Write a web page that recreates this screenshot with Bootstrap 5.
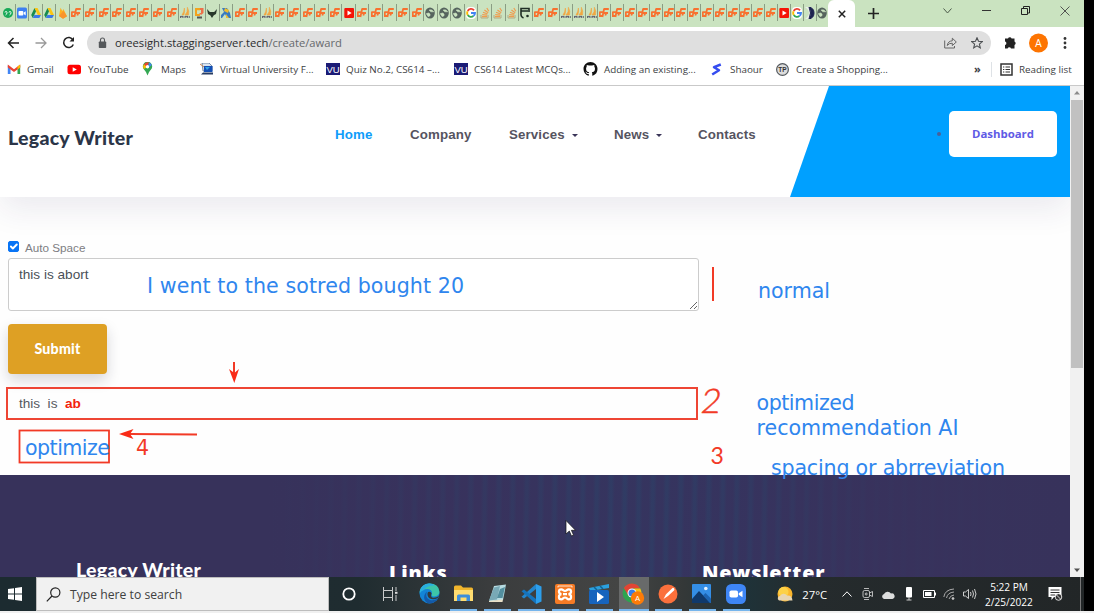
<!DOCTYPE html>
<html lang="en">
<head>
<meta charset="utf-8">
<meta name="viewport" content="width=device-width, initial-scale=1">
<title>Legacy Writer</title>
<link href="https://cdn.jsdelivr.net/npm/bootstrap@5.3.0/dist/css/bootstrap.min.css" rel="stylesheet">
<style>
  :root { --ui: "Open Sans", "Noto Sans", sans-serif; --doc: "Liberation Sans", Arial, sans-serif; --head: Lato, "Open Sans", sans-serif; }
  body { width: 1094px; height: 613px; overflow: hidden; background: #000; font-family: var(--doc); }
  svg { display: block; flex: none; }
  .screen { width: 1084px; height: 611px; background: #fff; }
  .edge-line { height: 2px; background: #f0f0f0; }

  /* browser chrome */
  .tab-strip { height: 27px; background: #cae3c0; }
  .tab-list { width: 828px; padding-left: 2px; overflow: hidden; }
  .fav { flex: none; width: 13.62px; height: 17px; margin-top: 4px; border-right: 1px solid #8a9d84; }
  .fav.slim { width: 12.83px; }
  .tab-active { width: 27px; background: #fff; border-radius: 6px 6px 0 0; }
  .win-btn { width: 39px; }
  .toolbar { height: 31px; font-family: var(--ui); }
  .address { width: 904px; height: 24px; background: #dfdfdf; font-size: 11.2px; color: #2a2c2e; padding: 1px 8px 0 11px; }
  .address .path { color: #66696c; }
  .bookmarks { height: 28px; border-bottom: 1px solid #c9c9c9; font-family: var(--ui); font-size: 9.85px; color: #3c4043; padding-bottom: 4px; }
  .bm { gap: 6px; white-space: nowrap; }

  /* site */
  .site { width: 1070px; height: 491px; overflow: hidden; background: #fefefe; }
  .site-head { height: 111px; background: #fff; box-shadow: 0 12px 30px rgba(40,35,90,.09); flex: none; }
  .site-logo { width: 327px; padding-left: 8px; font: 900 19.6px var(--head); letter-spacing: .22px; color: #2b3548; padding-bottom: 9px; }
  .main-nav { font-size: 13.3px; font-weight: 700; color: #56545f; padding-bottom: 13px; letter-spacing: .12px; }
  .main-nav .here { color: #0f9dfa; }
  .tri { width: 0; height: 0; border: 3.2px solid transparent; border-top: 3.6px solid #3a3558; border-bottom: 0; margin-left: 7px; }
  .slant { width: 280px; background: #00a0ff; clip-path: polygon(39px 0, 100% 0, 100% 100%, 0 100%); padding: 25px 13px 0 0; }
  .dash { width: 108px; height: 46px; padding-bottom: 1px; border-radius: 5px; background: #fff; color: #605be5; font: 700 11.4px "Open Sans", sans-serif; }
  .dot { width: 4px; height: 4px; background: #49609a; margin: 0 8px 0 0; }
  .editor { padding: 43px 0 0 8px; height: 278px; flex: none; }
  .editor .form-check-input { width: 11px; height: 11px; margin: 0 0 1px; border-radius: 2px; background-color: #0874f5; border-color: #0874f5; background-size: 13px; }
  .auto { font-size: 11.7px; color: #7d7d82; gap: 6px; height: 14px; }
  .editor textarea.form-control { width: 691px; height: 53px; min-height: 0; margin-top: 4px; border: 1px solid #ccc; border-radius: 3px; font-size: 13.6px; line-height: 18px; padding: 7px 10px 5px; color: #495057; box-shadow: none; }
  .btn.submit { width: 99px; height: 50px; margin-top: 13px; padding: 0 0 2px; background: #dea024; border: 0; border-radius: 4px; color: #fff; font: 900 14.2px var(--head); letter-spacing: .2px; box-shadow: 0 6px 14px rgba(30,30,50,.18); }
  .result { width: 692px; height: 33px; margin: 13px 0 0 -1.6px; border: 2px solid #ee4534; padding: 2px 0 0 10.5px; font-size: 13.6px; color: #55585e; white-space: pre; }
  .result b { color: #f2230d; }
  .site-foot { flex: 1; color: #fff; padding: 82px 0 0 76px;
    background: linear-gradient(90deg, #37325b 0, #37325b 25%, rgba(56,50,92,.6) 45%, rgba(50,54,95,.45) 58%, rgba(52,52,94,.5) 68%, rgba(56,50,92,.9) 82%, #37325b 100%),
      repeating-linear-gradient(91deg, #38335f 0 5px, #2f4068 8px 10px, #38335f 13px 14px); }
  .site-foot h5 { width: 313px; margin: 0; font: 900 19.6px/26px var(--head); letter-spacing: .22px; white-space: nowrap; }
  .site-foot h5.wide { font: 800 19.8px/29px "Open Sans", sans-serif; letter-spacing: .8px; padding-top: 1px; }
  .scroll { width: 14px; height: 491px; background: #f1f1f1; }
  .thumb { width: 12px; height: 268px; margin: 1px auto 0; background: #c1c1c1; }
  .ink { left: 0; top: 86px; z-index: 3; pointer-events: none; }

  /* taskbar */
  .taskbar { height: 34px; color: #fff; font-family: var(--ui); background: linear-gradient(90deg, #1c2b30 0, #1f2c30 33%, #3a3c3d 45%, #444544 57%, #343838 63%, #1f3238 69%, #252b2d 75%, #222627 100%); }
  .task-search { width: 293px; background: #f1f1f1; border: 1px solid #bdbdbd; color: #404040; font-size: 12.2px; gap: 9px; padding-left: 9px; }
  .app { width: 34.1px; position: relative; padding-bottom: 1px; }
  .app.open::after { content: ""; position: absolute; bottom: 0; left: 4px; width: 27px; height: 2px; background: #76b5ec; }
  .app.now { background: #686a6a; width: 30px; margin: 0 2px; }
  .app.now::after { left: 0; width: 30px; }
  .tray-i { width: 20.4px; }
  .clock { width: 58px; font-size: 10.1px; line-height: 15.5px; text-align: center; white-space: nowrap; padding-top: 2px; }
  .peek { width: 4px; height: 34px; margin-left: 7px; border-left: 1px solid #777; }
</style>
</head>
<body>
<svg width="0" height="0" class="position-absolute" aria-hidden="true">
  <symbol id="i-x" viewBox="0 0 10 12"><path d="M5 2H9.800M5.200 1.500L3.400 10M.3 5.200H3.800M5 6H9M.8 5V9H3.200M7.300 6L6.300 8.500" fill="none" stroke="#f8712f" stroke-width="1.800"/></symbol>
  <symbol id="i-chat" viewBox="0 0 10 12"><circle cx="5" cy="6" r="5" fill="#18a957"/><path d="M2 5.500A1 1 0 1 1 4 5.500Q4 7.500 2.500 8M6 5.500A1 1 0 1 1 8 5.500Q8 7.500 6.500 8" fill="none" stroke="#fff" stroke-width=".9"/></symbol>
  <symbol id="i-zoom" viewBox="0 0 10 12"><rect y=".6" width="10" height="11" rx="1.600" fill="#3e80f1"/><rect x="1.500" y="4" width="4.800" height="4.600" rx="1" fill="#fff"/><path d="M6.700 5.600L8.700 4.200V8.400L6.700 7z" fill="#fff"/></symbol>
  <symbol id="i-drive" viewBox="0 0 10 12"><path d="M3.500 1L.2 8 1.800 11 5.200 4z" fill="#188b50"/><path d="M3.500 1H6.500L10 8H6.800z" fill="#fbc412"/><path d="M3.300 8H10L8.300 11H1.800z" fill="#3c79e6"/></symbol>
  <symbol id="i-fire" viewBox="0 0 10 12"><path d="M1 9L2.500.7 4.400 4 5.400 2 9 9.200 5 11.700z" fill="#ffb01f"/><path d="M1 9L5.400 4 9 9.200 5 11.700z" fill="#f9942b"/></symbol>
  <symbol id="i-pma" viewBox="0 0 10 12"><path d="M2 8Q4 5 4.400 1Q5 5 3.800 8zM5 8Q8 5 7.400.3Q9.500 4 8.500 8z" fill="#f2a640" stroke="#f2a640" stroke-width=".6"/><path d="M.5 9V11M2.200 9V11M4 9V11M5.800 9V11M7.600 9V11M9.300 9V11M.5 9.400H3M5 9.400H8" stroke="#5c5a6b" stroke-width=".9"/></symbol>
  <symbol id="i-cube" viewBox="0 0 10 12"><path d="M1 1H6V3.200H3V7H6V9H1z" fill="#f3a31e"/><path d="M6 1H9.500V6L7 8 5 6H7V3H6z" fill="#ee6f49"/><path d="M3 10.500H8" stroke="#555" stroke-width="2"/></symbol>
  <symbol id="i-deer" viewBox="0 0 10 12"><path d="M0 2L2.800 5H7.200L10 2 9 7 6.800 8.300 5 11 3.200 8.300 1 7z" fill="#28382b"/></symbol>
  <symbol id="i-kid" viewBox="0 0 10 12"><path d="M1 1H6L9 6 10 11H6L4 7 1 11H0V8L3 5z" fill="#397bc0"/><path d="M4 1L8 3 7 6 3 4zM5 7L8 11H5z" fill="#f1bd2d"/></symbol>
  <symbol id="i-yt" viewBox="0 0 10 12"><rect x=".3" y="1" width="9.700" height="10" rx="1" fill="#f51407"/><path d="M3.500 3.500L7.700 6 3.500 8.500z" fill="#fff"/></symbol>
  <symbol id="i-globe" viewBox="0 0 10 12"><ellipse cx="5" cy="6" rx="4.800" ry="5.500" fill="#56645e"/><path d="M1 6.800Q4 5 5 7T3 9.800M4 3Q7 1.800 8.800 4.800H5.800z" fill="#cae3c0" stroke="#cae3c0" stroke-width=".5"/></symbol>
  <symbol id="i-g" viewBox="0 0 10 12"><rect width="10" height="12" rx="4" fill="#fff"/><g fill="none" stroke-width="1.900"><path d="M8 3.300A3.800 4 0 0 0 1.700 4" stroke="#ea4335"/><path d="M1.600 4.200A4 4 0 0 0 1.700 8" stroke="#fbbc05"/><path d="M1.800 8A3.800 4 0 0 0 7.400 9" stroke="#34a853"/><path d="M5 6H9Q9 8 7.400 9" stroke="#4285f4"/></g></symbol>
  <symbol id="i-so" viewBox="0 0 10 12"><path d="M1 8V11H8V8" fill="none" stroke="#b4aa83"/><path d="M2 9.600H7M2.200 7.600L7 8.200M3 5.200L7.600 7M4.400 3L8.200 5.800M6.800 1L8.800 4.200" stroke="#ef9d50" stroke-width="1.200"/></symbol>
  <symbol id="i-cup" viewBox="0 0 10 12"><path d="M3.500 11Q1 10 1 8V1.500H9V5M1 4H8" fill="none" stroke="#1e2e24" stroke-width="1.600"/><circle cx="7.500" cy="9" r="1.300" fill="#1e2e24"/></symbol>
  <symbol id="i-moon" viewBox="0 0 10 12"><path d="M0 0H7V12H0Q8 6 0 0z" fill="#e9eee8"/><path d="M4 0Q9 1 9 6T4 12Q7 6 4 0z" fill="#1e2350" stroke="#1e2350"/></symbol>
</svg>

<div class="screen position-relative">
  <div class="tab-strip d-flex">
    <div class="tab-list d-flex" id="tabs"></div>
    <div class="tab-active d-flex align-items-center justify-content-center"><svg width="8" height="8" viewBox="0 0 8 8"><path d="M.8.8L7.200 7.200M7.200.8L.8 7.200" stroke="#222" stroke-width="1.500"/></svg></div>
    <div class="d-flex align-items-center justify-content-center" style="width:37px"><svg width="11" height="11" viewBox="0 0 11 11"><path d="M5.500 0V11M0 5.500H11" stroke="#222" stroke-width="1.700"/></svg></div>
    <div class="d-flex ms-auto" style="padding-bottom:6px">
      <div class="win-btn d-flex align-items-center justify-content-center"><svg width="9" height="6" viewBox="0 0 9 6"><path d="M.5.5L4.500 5 8.500.5" fill="none" stroke="#4d5a4a"/></svg></div>
      <div class="win-btn d-flex align-items-center justify-content-center"><svg width="9" height="2"><path d="M0 .5H9" stroke="#333"/></svg></div>
      <div class="win-btn d-flex align-items-center justify-content-center"><svg width="9" height="9" viewBox="0 0 9 9"><path d="M.5 2.500H6.500V8.500H.5zM2.500 2V.5H8.500V7H7" fill="none" stroke="#222"/></svg></div>
      <div class="win-btn d-flex align-items-center justify-content-center"><svg width="10" height="10" viewBox="0 0 10 10"><path d="M.5.5L9.500 9.500M9.500.5L.5 9.500" stroke="#444" stroke-width=".9"/></svg></div>
    </div>
  </div>

  <div class="toolbar d-flex align-items-center">
    <svg width="87" height="30" viewBox="0 0 87 30" fill="none"><path d="M19 15H8.500M13.500 10L8.500 15 13.500 20" stroke="#222" stroke-width="1.500"/><path d="M35.500 15H46M41 10L46 15 41 20" stroke="#999" stroke-width="1.300"/><path d="M73 12A5 5 0 1 0 73.300 16.500" stroke="#222" stroke-width="1.500"/><path d="M74 9V13.500H69.500z" fill="#222"/></svg>
    <div class="address rounded-pill d-flex align-items-center">
      <svg width="9" height="12" viewBox="0 0 9 12"><rect x=".8" y="4.500" width="7.400" height="6.500" rx=".8" fill="#55585b"/><path d="M2.500 5V3A2 2 0 0 1 6.500 3V5" fill="none" stroke="#55585b" stroke-width="1.100"/></svg>
      <span class="ms-2">oreesight.staggingserver.tech<span class="path">/create/award</span></span>
      <svg class="ms-auto" width="13" height="12" viewBox="0 0 13 12" fill="none" stroke="#666"><path d="M.7 3.500V11H10.500V9M3.200 8.500Q4 4 8.300 3.800V1.200L12.300 5 8.300 8.600V6.200Q5 6 3.200 8.500z"/></svg>
      <svg style="margin-left:14px" width="12" height="12" viewBox="0 0 12 12"><path d="M6 .8L7.500 4.300 11.300 4.600 8.400 7.100 9.300 10.900 6 8.900 2.700 10.900 3.600 7.100.7 4.600 4.500 4.300z" fill="none" stroke="#4c4f52" stroke-width="1.100"/></svg>
    </div>
    <svg width="93" height="30" viewBox="0 0 93 30"><path d="M14 10.500H17A1.900 1.900 0 0 1 20.600 10.500H23.500V13.500A1.900 1.900 0 0 1 23.500 17V20.500H20A1.800 1.800 0 0 0 16.600 20.500H14V17A1.800 1.800 0 0 0 14 13.500z" fill="#222"/><circle cx="47.500" cy="15" r="9.500" fill="#fd7401"/><text x="47.500" y="19" font-size="10.500" fill="#fff" text-anchor="middle" font-family="Roboto">A</text><g fill="#333"><circle cx="74" cy="10.500" r="1.400"/><circle cx="74" cy="15" r="1.400"/><circle cx="74" cy="19.500" r="1.400"/></g></svg>
  </div>

  <div class="bookmarks d-flex align-items-center">
    <div class="bm d-flex align-items-center" style="width:60px;padding-left:7px"><svg width="14" height="12" viewBox="0 0 14 12"><path d="M.8 11V2.500L3.500 4.500V11z" fill="#4285f4"/><path d="M10.500 11V4.500L13.200 2.500V11z" fill="#34a853"/><path d="M.8 1.500L7 6.200 13.200 1.500V4.500L7 9 .8 4.500z" fill="#ea4335"/><path d="M10.500 3.500L13.200 1.500V4.500L10.500 6.500z" fill="#fbbc04"/></svg><span>Gmail</span></div>
    <div class="bm d-flex align-items-center" style="width:81px;padding-left:7px"><svg width="15" height="11" viewBox="0 0 15 11"><rect x=".5" y=".8" width="13.500" height="9.500" rx="2.500" fill="#f00"/><path d="M5.700 3.200L9.800 5.500 5.700 7.800z" fill="#fff"/></svg><span>YouTube</span></div>
    <div class="bm d-flex align-items-center" style="width:59px;gap:7px"><svg width="13" height="14" viewBox="0 0 13 14"><path d="M6.500 13.500Q5.500 10 3 7.500A4.700 4.700 0 1 1 10 7.500Q7.500 10 6.500 13.500z" fill="#34a853"/><path d="M2.500 7A4.600 4.600 0 0 1 3 2L7 5z" fill="#fbbc04"/><path d="M3 2.200A4.700 4.700 0 0 1 8 .6L6 5z" fill="#ea4335"/><path d="M8 .6A4.700 4.700 0 0 1 10.800 3L7 6z" fill="#4285f4"/><circle cx="6.500" cy="4.800" r="1.700" fill="#fff"/></svg><span>Maps</span></div>
    <div class="bm d-flex align-items-center" style="width:126px"><svg width="14" height="13" viewBox="0 0 14 13"><path d="M2 0H9L12 3V8H3z" fill="#d9e3ef" stroke="#486285" stroke-width=".7"/><path d="M4 3H12.500V9H4z" fill="#134fb4"/><path d="M5 4H10L7 7z" fill="#37a4e4"/><path d="M3 9.500H13V11.500H1z" fill="#283d63"/><path d="M0 1L4 4" stroke="#d18a4d"/></svg><span>Virtual University F...</span></div>
    <div class="bm d-flex align-items-center" style="width:128px"><svg width="14" height="13" viewBox="0 0 14 13"><rect width="14" height="12" fill="#1b1b75"/><text x="7" y="9.500" font-size="9.500" text-anchor="middle" fill="#fff" font-family="Liberation Sans">VU</text></svg><span>Quiz No.2, CS614 –...</span></div>
    <div class="bm d-flex align-items-center" style="width:129px"><svg width="14" height="13" viewBox="0 0 14 13"><rect width="14" height="12" fill="#1b1b75"/><text x="7" y="9.500" font-size="9.500" text-anchor="middle" fill="#fff" font-family="Liberation Sans">VU</text></svg><span>CS614 Latest MCQs...</span></div>
    <div class="bm d-flex align-items-center" style="width:128px"><svg width="15" height="14" viewBox="0 0 16 16"><path fill="#111" d="M8 0C3.580 0 0 3.580 0 8c0 3.540 2.290 6.530 5.470 7.590.4.070.55-.17.55-.38v-1.490c-2.010.37-2.530-.49-2.690-.94-.09-.23-.48-.94-.82-1.130-.28-.15-.68-.52-.01-.53.63-.01 1.080.58 1.230.82.72 1.210 1.870.87 2.330.66.07-.52.28-.87.51-1.070-1.780-.2-3.640-.89-3.640-3.950 0-.87.31-1.590.82-2.150-.08-.2-.36-1.020.08-2.120 0 0 .67-.21 2.200.82a7.700 7.700 0 0 1 4 0c1.530-1.040 2.200-.82 2.200-.82.44 1.100.16 1.920.08 2.120.51.56.82 1.270.82 2.150 0 3.070-1.870 3.750-3.650 3.950.29.25.54.73.54 1.480v2.190c0 .21.15.46.55.38A8 8 0 0 0 16 8c0-4.420-3.580-8-8-8"/></svg><span>Adding an existing...</span></div>
    <div class="bm d-flex align-items-center" style="width:65px;gap:8px"><svg width="11" height="13" viewBox="0 0 11 13"><path d="M9.800 1.500L3 4.200 8 7.200 1.200 11.500" fill="none" stroke="#354df0" stroke-width="2.500" stroke-linejoin="round"/></svg><span>Shaour</span></div>
    <div class="bm d-flex align-items-center" style="width:198px;gap:7px"><svg width="13" height="13" viewBox="0 0 13 13"><circle cx="6.500" cy="6.500" r="5.900" fill="#ddd" stroke="#53595e" stroke-width="1.200"/><text x="6.500" y="9" font-size="6.500" font-weight="bold" text-anchor="middle" fill="#333" font-family="Liberation Sans">TP</text></svg><span>Create a Shopping...</span></div>
    <span class="fw-bold" style="width:17px;font-size:11px">»</span>
    <div class="bm d-flex align-items-center border-start ps-2"><svg width="13" height="13" viewBox="0 0 13 13"><path d="M1 1H12V12H1z" fill="none" stroke="#333" stroke-width="1.500"/><path d="M3 4H4.300M3 6.500H4.300M3 9H4.300M5.500 4H10M5.500 6.500H10M5.500 9H10" stroke="#333" stroke-width="1.100"/></svg><span>Reading list</span></div>
  </div>

  <div class="d-flex">
    <main class="site d-flex flex-column">
      <header class="site-head d-flex">
        <div class="site-logo d-flex align-items-center">Legacy Writer</div>
        <nav class="main-nav d-flex align-items-center" style="width:463px">
          <span class="here" style="width:75px;padding-left:8px;margin-right:8px">Home</span><span style="width:99px">Company</span><span class="d-flex align-items-center" style="width:105px">Services<i class="tri"></i></span><span class="d-flex align-items-center" style="width:84px">News<i class="tri"></i></span><span>Contacts</span>
        </nav>
        <div class="slant d-flex justify-content-end">
          <div class="d-flex align-items-center" style="height:46px"><i class="dot rounded-circle"></i><a class="dash d-flex align-items-center justify-content-center text-decoration-none" href="#">Dashboard</a></div>
        </div>
      </header>
      <section class="editor">
        <label class="auto d-flex align-items-center"><input class="form-check-input" type="checkbox" checked><span style="padding-top:2px">Auto Space</span></label>
        <textarea class="form-control" spellcheck="false">this is abort</textarea>
        <button class="btn submit d-block">Submit</button>
        <div class="result d-flex align-items-center">this  is  <b>ab</b></div>
      </section>
      <footer class="site-foot d-flex"><h5>Legacy Writer</h5><h5 class="wide">Links</h5><h5 class="wide">Newsletter</h5></footer>
    </main>
    <div class="scroll d-flex flex-column">
      <svg width="14" height="13" viewBox="0 0 14 13"><path d="M4 8.500L7 5 10 8.500z" fill="#8b8b8b"/></svg>
      <div class="thumb"></div>
      <svg class="mt-auto" width="14" height="14" viewBox="0 0 14 14"><path d="M4 5.500L7 9 10 5.500z" fill="#505050"/></svg>
    </div>
  </div>

  <!-- pen and text notes laid over the page -->
  <svg class="ink position-absolute" width="1070" height="491" viewBox="0 86 1070 491" font-family="DejaVu Sans, sans-serif" font-size="20.6">
    <g fill="#2f86ee">
      <text x="147" y="292.500" textLength="317">I went to the sotred bought 20</text>
      <text x="758" y="297.500" textLength="72">normal</text>
      <text x="756.500" y="410" textLength="98">optimized</text>
      <text x="756.500" y="435" textLength="202">recommendation AI</text>
      <text x="771" y="474.500" textLength="234">spacing or abrreviation</text>
    </g>
    <g fill="none" stroke="#f23a26" stroke-width="2">
      <path d="M713 267V301"/>
      <rect x="19.500" y="430.500" width="89.500" height="32" stroke-width="1.800"/>
      <path d="M234 362V374M197 434.500L130 434"/>
    </g>
    <text x="25" y="455" textLength="85" fill="#2f86ee">optimize</text>
    <path d="M234.300 383L229 369 234.300 373 239 369zM119 434L133.500 429 130 434 133.500 439z" fill="#f92b17"/>
    <g fill="#f23a26"><text x="136" y="455">4</text>
      <text x="0" y="0" font-family="Lato" font-weight="300" font-size="34" stroke="#f23a26" stroke-width=".5" transform="translate(700 412.500) skewX(-8)" textLength="19">2</text>
      <text x="710.500" y="464" font-family="Lato" font-weight="400" font-size="23" textLength="12">3</text></g>
    <path d="M566 520.500V534L569.300 531 571.500 536 573.500 535.100 571.400 530.300H575.500z" fill="#fff" stroke="#111" stroke-width=".7"/>
  </svg>

  <div class="taskbar d-flex align-items-stretch">
    <div class="d-flex align-items-center ps-2" style="width:36px"><svg width="14" height="14" viewBox="0 0 14 14"><path d="M0 2L6 1.200V6.500H0zM7 1L14 0V6.500H7zM0 7.500H6V12.800L0 12zM7 7.500H14V14L7 13z" fill="#fff"/></svg></div>
    <div class="task-search d-flex align-items-center"><svg width="15" height="15" viewBox="0 0 15 15" fill="none" stroke="#222" stroke-width="1.200"><circle cx="9.300" cy="5.500" r="4.600"/><path d="M6 9L.8 14.300"/></svg><span style="padding-top:3px">Type here to search</span></div>
    <div class="d-flex align-items-center justify-content-center" style="width:40px"><svg width="14" height="14"><circle cx="7" cy="7" r="5.700" fill="none" stroke="#fff" stroke-width="1.800"/></svg></div>
    <div class="d-flex align-items-center justify-content-center" style="width:43px"><svg width="15" height="14" viewBox="0 0 15 14" fill="none" stroke="#ddd"><path d="M.5 0V3.500H9.500V0M.5 14V10.500H9.500V14M.5 3.500V10.500M9.500 3.500V10.500M13 0V4M13 8V14" stroke-width=".9"/><path d="M12 5.800H14.500" stroke-width="2"/></svg></div>
    <div class="app d-flex align-items-center justify-content-center"><svg width="21" height="21" viewBox="0 0 21 21"><circle cx="10.500" cy="10.500" r="10" fill="#1385d6"/><path d="M.8 8Q3 .5 10.500.5 20 .5 20.500 9 20 13 15 13.500 12 13.500 13 11 13.500 6.500 8.500 6 3 6 .8 10z" fill="#3dc5a8"/><path d="M.8 8Q3 .5 10 .5 14 .5 16 2.500 8 2 5 7 2 8 .8 10z" fill="#29afe0"/><path d="M8 8.500Q5.500 15 11 17 15 18 19 15.500 15 21.500 8.500 20 4 17 5.500 12 6.500 9.500 8 8.500z" fill="#1459a8"/><path d="M9 9Q12 8 12.600 10.500 11 14 14 14.800 19 14.500 20.500 12L19 15Q14 17.500 10 15 7.500 12 9 9z" fill="#343a3c"/></svg></div>
    <div class="app open d-flex align-items-center justify-content-center"><svg width="19" height="17" viewBox="0 0 19 17"><path d="M0 2Q0 .5 1.500.5H7L9 2.500H17.500Q19 2.500 19 4V16H0z" fill="#f1b62d"/><path d="M0 5H19V16H0z" fill="#ffdc70"/><path d="M3 16V11Q3 9.500 4.500 9.500H14.500Q16 9.500 16 11V16H12.500V12.500H6.500V16z" fill="#3d8edb"/></svg></div>
    <div class="app open d-flex align-items-center justify-content-center"><svg width="19" height="19" viewBox="0 0 19 19"><path d="M6 2L18 .5 15 16 1 17.500z" fill="#b8dce2"/><path d="M6 3.500L12 2 9 15.500 1 16.500z" fill="#78a9b6"/><path d="M12 5L17 3 14.500 14H9z" fill="#538f9f"/><path d="M1 17L15 15.500 14.500 18H1z" fill="#e9e0c8"/></svg></div>
    <div class="app open d-flex align-items-center justify-content-center"><svg width="21" height="20" viewBox="0 0 21 20"><path d="M15 0L20.500 2.500V17.500L15 20z" fill="#2c9fec"/><path d="M15 0V5L3 14.500 .5 12.800z" fill="#2386cd"/><path d="M15 20V15L3 5.500 .5 7.200z" fill="#1574bd"/></svg></div>
    <div class="app open d-flex align-items-center justify-content-center"><svg width="20" height="20" viewBox="0 0 20 20"><rect width="20" height="20" rx="2" fill="#f67b25"/><path d="M3 3.500V2H17V3.500" fill="none" stroke="#fff" stroke-width=".8"/><path d="M8 10.200H12M6.500 10.200C3 9.800 3.200 5.300 6.300 5.300C8 5.300 8.300 7 10 7S12 5.300 13.700 5.300C16.800 5.300 17 9.800 13.500 10.200C17 10.600 16.800 15.300 13.700 15.300C12 15.300 11.700 13.500 10 13.500S8 15.300 6.300 15.300C3.200 15.300 3 10.600 6.500 10.200" fill="none" stroke="#fff" stroke-width="2.200"/></svg></div>
    <div class="app open d-flex align-items-center justify-content-center"><svg width="21" height="20" viewBox="0 0 21 20"><path d="M0 4L20 0V4L1 7z" fill="#2aa0de"/><path d="M5 3L8 6M11 2L14 5" stroke="#126193" stroke-width="1.500"/><rect x="0" y="6" width="20" height="14" rx="1.500" fill="#1764bd"/><path d="M8 8L15 13 8 18z" fill="#fff"/></svg></div>
    <div class="app open now d-flex align-items-center justify-content-center"><svg width="23" height="22" viewBox="0 0 23 22"><circle cx="10" cy="10" r="9.500" fill="#2da44f"/><path d="M1.800 5A9.500 9.500 0 0 1 18.300 5.500H10L6 12z" fill="#e24435"/><path d="M18.300 5.500A9.500 9.500 0 0 1 10 19.500L14 11 12 5.500z" fill="#fbc116"/><circle cx="10" cy="10" r="4.500" fill="#fff"/><circle cx="10" cy="10" r="3.500" fill="#397fe9"/><circle cx="15.500" cy="15" r="6.700" fill="#fd7b08"/><text x="15.500" y="18" font-size="8" fill="#fff" text-anchor="middle" font-family="Roboto">A</text></svg></div>
    <div class="app open d-flex align-items-center justify-content-center"><svg width="20" height="20" viewBox="0 0 20 20"><circle cx="10" cy="10" r="9.500" fill="#fb703c"/><path d="M14.800 3.800A1.600 1.600 0 0 1 16 6.500L10 12 5.500 15 8 10.200z" fill="#fff"/></svg></div>
    <div class="app open d-flex align-items-center justify-content-center"><svg width="19" height="19" viewBox="0 0 19 19"><rect width="19" height="19" rx="1" fill="#348ee6"/><path d="M0 15L7 7 18.500 19H0z" fill="#10396b"/><path d="M11 11.500L13.500 9 19 14.500V19H18z" fill="#1d64b2"/><circle cx="13.800" cy="4.500" r="1.800" fill="#e6f3ff"/></svg></div>
    <div class="app open d-flex align-items-center justify-content-center"><svg width="20" height="20" viewBox="0 0 20 20"><rect width="20" height="20" rx="5.500" fill="#3e86f6"/><rect x="3.500" y="6.500" width="8.500" height="7" rx="1.800" fill="#fff"/><path d="M12.700 9.200L16.500 6.800V13.200L12.700 10.800z" fill="#fff"/></svg></div>

    <div class="d-flex align-items-center ms-auto">
      <div class="d-flex justify-content-center" style="width:30px"><svg width="18" height="17" viewBox="0 0 18 17"><circle cx="9" cy="8" r="7.500" fill="#fbb62c"/><circle cx="7.500" cy="6" r="5" fill="#fcd148"/><path d="M3 14.500A2.400 2.400 0 0 1 4 10 4 4 0 0 1 11 9.500Q16 9 16.500 14.500z" fill="#e8d5b2"/></svg></div>
      <span style="width:37px;padding:2px 0 0 2px;font-size:11.300px">27°C</span>
      <div class="tray-i d-flex justify-content-center"><svg width="10" height="6"><path d="M.5 5.500L5 .8 9.500 5.500" fill="none" stroke="#fff"/></svg></div>
      <div class="tray-i d-flex justify-content-center"><svg width="11" height="12" viewBox="0 0 11 12" fill="none" stroke="#ddd" stroke-width=".8"><rect x="1" y="2.500" width="6.500" height="7" rx="1.500"/><path d="M2 .5H7M2 11.500H7M7.500 5L10.500 3.500V8.500L7.500 7"/><circle cx="4.200" cy="6" r="1"/></svg></div>
      <div class="tray-i d-flex justify-content-center"><svg width="14" height="9" viewBox="0 0 14 9"><path d="M3 9A2.600 2.600 0 0 1 3 4 4 4 0 0 1 10 3.500 2.800 2.800 0 0 1 11.500 9z" fill="#ddd"/></svg></div>
      <div class="tray-i d-flex justify-content-center"><svg width="8" height="14" viewBox="0 0 8 14"><rect x="1" width="6" height="10.500" rx="1" fill="#fff"/><path d="M4 10V13M1.500 13H6.500" stroke="#ccc"/></svg></div>
      <div class="tray-i d-flex justify-content-center"><svg width="13" height="8" viewBox="0 0 13 8"><path d="M.5.5H11.500V7.500H.5zM12.500 2.500V5.500" fill="none" stroke="#fff"/><rect x="2" y="2" width="6.500" height="4" fill="#fff"/></svg></div>
      <div class="tray-i d-flex justify-content-center"><svg width="12" height="12" viewBox="0 0 12 12" fill="none" stroke="#aaa"><path d="M.8 9Q2 1.500 11 1M3.500 10Q4.500 4.500 11 4M6 11Q7 7.500 11 7"/><circle cx="10" cy="10.500" r="1" fill="#fff"/></svg></div>
      <div class="tray-i d-flex justify-content-center"><svg width="14" height="12" viewBox="0 0 14 12" fill="none" stroke="#ddd" stroke-width=".9"><path d="M.5 4H2.500L5.500 1.500V10.500L2.500 8H.5zM7.500 4Q8.500 6 7.500 8M9.500 2.500Q11.500 6 9.500 9.500M11.500 1Q14.500 6 11.500 11"/></svg></div>
      <div class="clock">5:22 PM<br>2/25/2022</div>
      <div class="d-flex justify-content-center" style="width:35px"><svg width="15" height="14" viewBox="0 0 15 14"><path d="M.5 0H13.500V10H6L3.500 13V10H.5z" fill="#fff"/><path d="M2.500 3H11.500M2.500 5.500H11.500M2.500 8H7" stroke="#333"/><circle cx="10.500" cy="10" r="3.300" fill="#333" stroke="#fff" stroke-width=".8"/><path d="M8.500 8L12.500 12" stroke="#fff" stroke-width=".8"/></svg></div>
      <div class="peek"></div>
    </div>
  </div>
</div>
<div class="edge-line"></div>

<script src="https://cdn.jsdelivr.net/npm/bootstrap@5.3.0/dist/js/bootstrap.bundle.min.js"></script>
<script>
  // open tabs, left to right; the second group belongs to narrower tabs
  const wide = 'chat zoom drive drive fire x x x x x x x x pma cube deer kid x x pma x x x x x yt x x x x x globe globe globe g so so so cup x x'.split(' ');
  const slim = 'pma pma pma x x x x x x x x x x x x x x yt g moon globe'.split(' ');
  const cell = (name, cls) => `<div class="fav ${cls} d-flex align-items-center justify-content-center"><svg width="10" height="12"><use href="#i-${name}"/></svg></div>`;
  document.getElementById('tabs').innerHTML = wide.map(n => cell(n, '')).join('') + slim.map(n => cell(n, 'slim')).join('');
</script>
</body>
</html>
